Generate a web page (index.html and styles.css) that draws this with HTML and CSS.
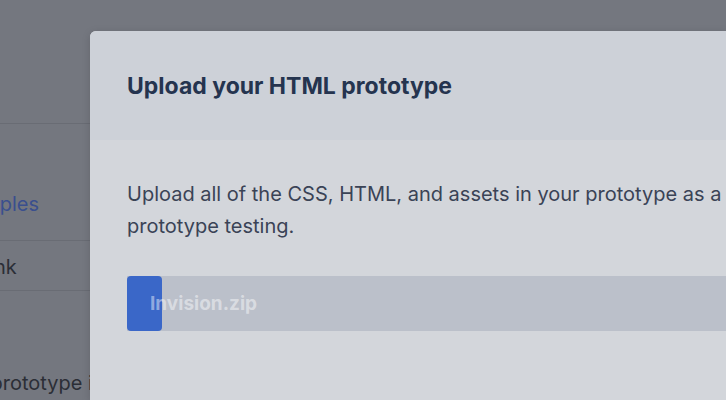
FILE: index.html
```html
<!DOCTYPE html>
<html lang="en">
<head>
    <meta charset="UTF-8">
    <title>Upload prototype</title>
    <link rel="stylesheet" href="styles.css">
</head>
<body>
    <div class="page">
        <div class="sidebar">
            <div class="sidebar-top"></div>
            <a href="#" class="sidebar-link active">See examples</a>
            <a href="#" class="sidebar-link">Share a link</a>
            <p class="sidebar-note">Test your prototype in</p>
        </div>
    </div>

    <div class="modal">
        <div class="modal-header">
            <h2>Upload your HTML prototype</h2>
        </div>
        <div class="modal-body">
            <p>Upload all of the CSS, HTML, and assets in your prototype as a .zip file for prototype testing.</p>
            <div class="upload-bar">
                <div class="upload-progress" style="width: 35px;"></div>
                <span class="upload-name">Invision.zip</span>
            </div>
        </div>
    </div>
</body>
</html>
```

FILE: styles.css
```css
:root {
    --backdrop: #74777f;
    --backdrop-line: #696c74;
    --header-bg: #cdd1d8;
    --body-bg: #d3d6db;
    --title-color: #25344f;
    --text-color: #3a4356;
    --bar-bg: #bbc0ca;
    --bar-fill: #3a67c8;
}

* {
    margin: 0;
    padding: 0;
    box-sizing: border-box;
}

body {
    font-family: Inter, "Open Sans", Arial, sans-serif;
    background-color: var(--backdrop);
    width: 726px;
    height: 400px;
    overflow: hidden;
    position: relative;
}

.page {
    display: flex;
}

.sidebar {
    width: 90px;
    display: flex;
    flex-direction: column;
}

.sidebar-top {
    height: 124px;
    border-bottom: 1px solid var(--backdrop-line);
}

.sidebar-link {
    display: block;
    margin-left: -93px;
    white-space: nowrap;
    font-size: 20px;
    color: #2b2e36;
    text-decoration: none;
    border-bottom: 1px solid var(--backdrop-line);
    height: 50px;
    line-height: 52px;
}

.sidebar-link.active {
    color: #3a4f8e;
    height: 117px;
    line-height: 32px;
    padding-top: 64px;
}

.sidebar-note {
    margin-left: -103px;
    margin-top: 80px;
    white-space: nowrap;
    font-size: 20px;
    color: #2b2e36;
}

/* Modal sits over the page */
.modal {
    position: absolute;
    top: 31px;
    left: 90px;
    right: 0;
    bottom: 0;
    border-radius: 6px 0 0 0;
    overflow: hidden;
    background-color: var(--body-bg);
    box-shadow: 0 2px 8px rgba(0,0,0,0.15);
}

.modal-header {
    height: 109px;
    display: flex;
    align-items: center;
    padding-left: 37px;
    background-color: var(--header-bg);
}

.modal-header h2 {
    font-size: 23px;
    font-weight: 700;
    color: var(--title-color);
}

.modal-body {
    padding: 38px 0 0 37px;
}

.modal-body p {
    font-size: 20px;
    line-height: 32px;
    color: var(--text-color);
    width: 780px;
}

.upload-bar {
    margin-top: 34px;
    height: 55px;
    background-color: var(--bar-bg);
    position: relative;
    display: flex;
    align-items: center;
}

.upload-progress {
    position: absolute;
    top: 0;
    left: 0;
    bottom: 0;
    background-color: var(--bar-fill);
    border-radius: 4px;
}

.upload-name {
    position: relative;
    margin-left: 23px;
    font-size: 19px;
    font-weight: 700;
    color: rgba(255,255,255,0.45);
}
```
